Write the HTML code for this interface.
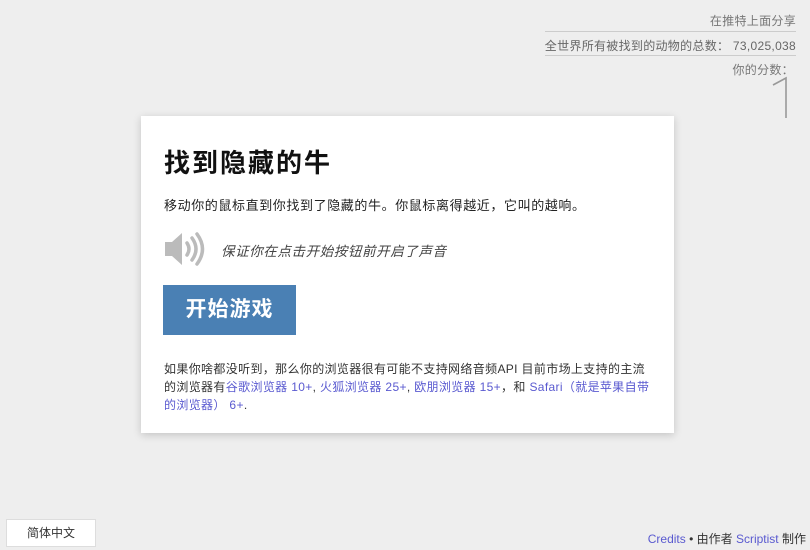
<!DOCTYPE html>
<html><head><meta charset="utf-8"><style>
body{margin:0;width:810px;height:550px;background:#eeeeee;font-family:"Liberation Sans","Noto Sans CJK SC",sans-serif;position:relative;overflow:hidden;color:#222}
.tr{position:absolute;right:14px;text-align:right;color:#777;font-size:12px;letter-spacing:.3px}
a{color:#5a5ad0;text-decoration:none}
.card{position:absolute;left:141px;top:116px;width:533px;height:317px;background:#fff;box-shadow:0 2px 8px rgba(0,0,0,.18)}
</style></head><body>
<div class="tr" style="top:12px">在推特上面分享</div>
<div style="position:absolute;left:545px;right:14px;top:31px;border-top:1px solid #ccc"></div>
<div class="tr" style="top:37px;color:#666">全世界所有被找到的动物的总数： 73,025,038</div>
<div style="position:absolute;left:545px;right:14px;top:55px;border-top:1px solid #ccc"></div>
<div class="tr" style="top:61px;right:16px">你的分数：</div>
<svg style="position:absolute;left:768px;top:76px" width="24" height="44"><path d="M5 9 L18 2 L18 42" stroke="#999" stroke-width="1.6" fill="none"/></svg>
<div class="card">
<div style="position:absolute;left:23px;top:27px;font-size:26px;font-weight:bold;color:#111;letter-spacing:2px">找到隐藏的牛</div>
<div style="position:absolute;left:23px;top:79px;font-size:13px;color:#222;letter-spacing:.6px">移动你的鼠标直到你找到了隐藏的牛。你鼠标离得越近，它叫的越响。</div>
<svg style="position:absolute;left:22px;top:116px" width="46" height="34" viewBox="0 0 46 34">
<path d="M2 10h7l10-9v32l-10-9H2z" fill="#bbb"/>
<path d="M24 11q4 6 0 12M29 6q8 11 0 22M34 2q11 15 0 30" stroke="#bbb" stroke-width="3.5" fill="none" stroke-linecap="round"/>
</svg>
<div style="position:absolute;left:80px;top:124px;font-size:13.5px;font-style:italic;color:#444;letter-spacing:.6px">保证你在点击开始按钮前开启了声音</div>
<div style="position:absolute;left:22px;top:169px;width:133px;height:50px;background:#4a80b4;color:#fff;font-size:21px;font-weight:bold;line-height:50px;text-align:center;letter-spacing:1px">开始游戏</div>
<div style="position:absolute;left:23px;top:244px;white-space:nowrap;font-size:12px;line-height:18px;color:#333;letter-spacing:.35px">如果你啥都没听到，那么你的浏览器很有可能不支持网络音频API 目前市场上支持的主流<br>的浏览器有<a>谷歌浏览器 10+</a>, <a>火狐浏览器 25+</a>, <a>欧朋浏览器 15+</a>，和 <a>Safari（就是苹果自带</a><br><a>的浏览器） 6+</a>.</div>
</div>
<div style="position:absolute;left:6px;top:519px;width:88px;height:26px;background:#fff;border:1px solid #ddd;font-size:12px;line-height:26px;text-align:center;color:#333">简体中文</div>
<div style="position:absolute;right:4px;top:530px;font-size:12px;color:#333"><a>Credits</a> • 由作者 <a>Scriptist</a> 制作</div>
</body></html>
